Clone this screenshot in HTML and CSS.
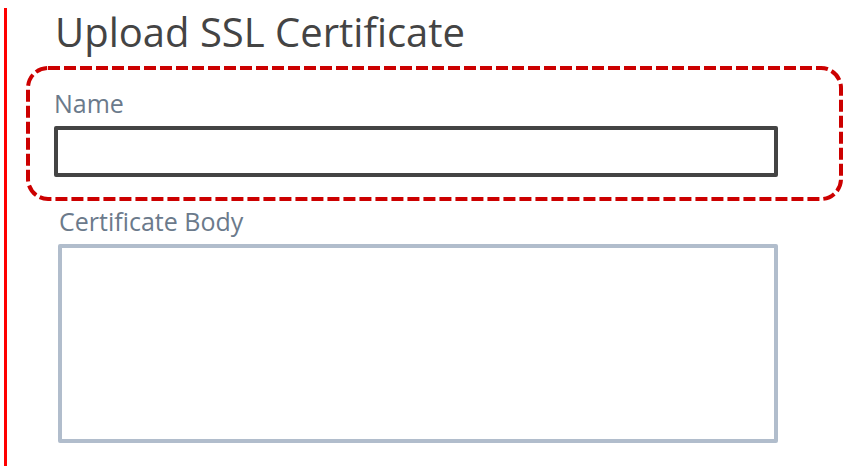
FILE: index.html
```html
<!DOCTYPE html>
<html>
<head>
<meta charset="utf-8">
<link rel="stylesheet" href="styles.css">
</head>
<body>
<div class="page">
  <h1 class="title">Upload SSL Certificate</h1>
  <div class="highlight">
    <svg class="dash" width="817" height="135" viewBox="0 0 817 135"><rect x="2" y="2" width="813" height="131" rx="20" ry="20" fill="none" stroke="#cc0000" stroke-width="4" stroke-dasharray="12 4"/></svg>
    <label class="label">Name</label>
    <div class="input"></div>
  </div>
  <label class="label label-body">Certificate Body</label>
  <div class="textarea"></div>
</div>
</body>
</html>
```
FILE: styles.css
```css
html, body { margin: 0; padding: 0; background: #fff; }
body { font-family: "Open Sans", "Liberation Sans", sans-serif; width: 844px; height: 468px; overflow: hidden; }
.page {
  margin: 8px 0 0 4px;
  height: 458px;
  border-left: 3px solid #ff0000;
  padding-left: 19px;
  box-sizing: border-box;
}
.title {
  margin: 0 0 0 29px;
  padding-top: 2px;
  font-size: 40px;
  line-height: 44px;
  font-weight: 400;
  color: #444444;
}
.highlight {
  position: relative;
  margin-top: 12px;
  width: 817px;
  height: 135px;
  box-sizing: border-box;
  padding: 22px 0 0 28px;
}
.dash { position: absolute; left: 0; top: 0; }
.label {
  display: block;
  font-size: 25px;
  line-height: 30px;
  color: #6b7a8b;
}
.input {
  margin-top: 8px;
  width: 724px;
  height: 51px;
  box-sizing: border-box;
  border: 4px solid #444444;
  border-radius: 2px;
}
.label-body { margin: 5px 0 0 33px; }
.textarea {
  margin: 8px 0 0 32px;
  width: 720px;
  height: 199px;
  box-sizing: border-box;
  border: 4px solid #b1bdcc;
  border-radius: 2px;
}
```
